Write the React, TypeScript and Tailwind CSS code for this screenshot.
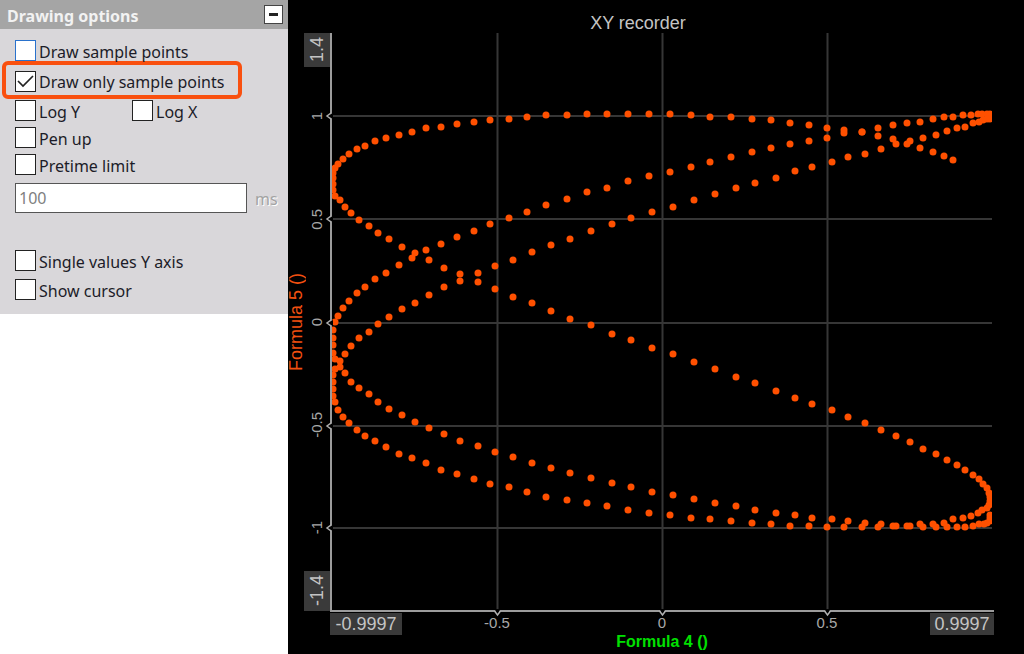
import type { ReactNode } from "react";
import clsx from "clsx";

// Frame that the recorded samples are expressed in.
const frame = { left: 330, top: 33, width: 664, height: 579 };

const px = (x: number) => `${((x - frame.left) / frame.width) * 100}%`;
const py = (y: number) => `${((y - frame.top) / frame.height) * 100}%`;

const xTicks = [
    { at: 497, label: "-0.5" },
    { at: 662, label: "0" },
    { at: 827, label: "0.5" },
];

const yTicks = [
    { at: 116, label: "1" },
    { at: 219, label: "0.5" },
    { at: 323, label: "0" },
    { at: 426, label: "-0.5" },
    { at: 528, label: "-1" },
];

const samples: [number, number][] = [
    // upper arc, right to left
    [953, 160], [944, 156], [933, 152], [920, 148], [907, 144], [893, 139],
    [878, 136], [862, 132], [844, 130], [827, 128], [809, 125], [790, 123],
    [771, 120], [752, 119], [731, 117], [710, 117], [691, 115], [670, 114],
    [649, 114], [628, 114], [607, 114], [587, 114], [567, 115], [546, 115],
    [527, 117], [509, 119], [490, 120], [474, 122], [457, 124], [441, 127],
    [426, 128], [412, 132], [399, 135], [386, 138], [375, 141], [365, 146],
    [357, 149], [349, 154], [343, 159], [338, 164], [335, 168], [333, 173],
    [333, 178], [333, 184], [333, 190], [335, 196], [340, 200], [345, 207],
    [351, 213], [359, 220],
    // diagonal down to the right edge
    [369, 226], [378, 233], [389, 239], [402, 247], [415, 253], [429, 260],
    [444, 268], [460, 274], [478, 282], [495, 289], [513, 297], [532, 303],
    [551, 311], [570, 319], [591, 325], [612, 334], [631, 340], [652, 348],
    [673, 354], [694, 362], [715, 369], [736, 377], [755, 383], [776, 391],
    [795, 398], [812, 404], [832, 410], [848, 417], [865, 423], [881, 430],
    [896, 436], [910, 442], [923, 449], [936, 454], [947, 460], [957, 465],
    [965, 470], [973, 475], [979, 479], [983, 484], [987, 488], [989, 493],
    [990, 497], [990, 501], [989, 505], [987, 508], [982, 510], [978, 513],
    [971, 516], [963, 518], [953, 519], [944, 523], [933, 524], [920, 524],
    // lower arc back to the left edge
    [907, 526], [893, 526], [878, 527], [862, 527], [844, 527], [827, 527],
    [809, 526], [790, 526], [771, 524], [752, 523], [731, 521], [710, 519],
    [691, 518], [670, 515], [649, 513], [628, 510], [607, 506], [587, 503],
    [567, 500], [546, 497], [527, 492], [509, 487], [490, 484], [474, 479],
    [457, 474], [441, 470], [426, 463], [412, 458], [399, 454], [386, 447],
    [375, 441], [365, 436], [357, 430], [349, 423], [343, 417], [338, 410],
    [335, 402], [333, 396], [333, 389], [333, 382], [333, 375], [335, 369],
    [335, 359], [333, 353], [333, 345], [333, 338], [333, 330], [335, 322],
    // rising to the upper right corner
    [338, 316], [343, 308], [349, 301], [357, 293], [365, 287], [375, 279],
    [386, 273], [399, 265], [412, 258], [426, 250], [441, 244], [457, 237],
    [474, 231], [490, 224], [509, 218], [527, 212], [546, 205], [567, 199],
    [587, 192], [607, 188], [628, 181], [649, 176], [670, 172], [691, 167],
    [710, 162], [731, 157], [752, 152], [771, 148], [790, 144], [809, 141],
    [827, 138], [844, 133], [862, 132], [878, 128], [893, 125], [907, 123],
    [920, 122], [933, 119], [944, 117], [953, 117], [963, 115], [971, 115],
    [978, 114], [982, 114], [987, 114], [990, 114], [990, 116], [990, 119],
    // and back down to the left
    [987, 119], [983, 120], [979, 122], [973, 123], [965, 127], [957, 128],
    [947, 131], [936, 135], [923, 138], [910, 141], [896, 144], [881, 149],
    [865, 154], [848, 157], [832, 162], [812, 167], [795, 171], [776, 178],
    [755, 183], [736, 188], [715, 194], [694, 200], [673, 207], [652, 212],
    [631, 218], [612, 224], [591, 231], [570, 239], [551, 245], [532, 252],
    [513, 260], [495, 266], [478, 273], [460, 281], [444, 287], [429, 295],
    [415, 303], [402, 309], [389, 317], [378, 324], [369, 332], [359, 338],
    [351, 346], [345, 354], [340, 361], [340, 367], [345, 373], [351, 382],
    // inner lower arc
    [359, 388], [369, 394], [378, 402], [389, 409], [402, 415], [415, 422],
    [429, 428], [444, 434], [460, 441], [478, 446], [495, 452], [513, 457],
    [532, 463], [551, 468], [570, 473], [591, 478], [612, 483], [631, 487],
    [652, 492], [673, 495], [694, 499], [715, 503], [736, 506], [755, 510],
    [776, 513], [795, 515], [812, 518], [832, 519], [848, 521], [865, 523],
    [881, 524], [896, 526], [910, 526], [923, 527], [936, 527], [947, 527],
    [957, 527], [965, 527], [973, 526], [979, 524], [984, 524], [987, 523],
    [990, 521], [990, 518], [990, 515],
];

type CheckProps = {
    label: string;
    defaultChecked?: boolean;
    focused?: boolean;
};

function Check({ label, defaultChecked, focused }: CheckProps) {
    return (
        <label className="flex h-[21px] items-center gap-[3px] whitespace-nowrap">
            <span className="grid shrink-0">
                <input
                    type="checkbox"
                    defaultChecked={defaultChecked}
                    className={clsx(
                        "peer col-start-1 row-start-1 size-[21px] appearance-none border bg-white",
                        focused ? "border-[#2a72cc]" : "border-[#222]",
                    )}
                />
                <svg
                    viewBox="0 0 21 21"
                    className="pointer-events-none invisible col-start-1 row-start-1 size-[21px] peer-checked:visible"
                    fill="none"
                    stroke="#222"
                    strokeWidth={1.7}
                >
                    <path d="M3 10 L8 15 L18 5" />
                </svg>
            </span>
            <span className="pt-[2px]">{label}</span>
        </label>
    );
}

function OptionsPanel() {
    return (
        <aside className="w-72 shrink-0 font-['Noto_Sans','DejaVu_Sans_Condensed',sans-serif] text-base text-[#1c1c28]">
            <header className="flex h-[29px] items-center justify-between bg-[#a5a5a5] pr-[5px] pl-[7px]">
                <h2 className="pt-[2px] text-base font-bold text-[#f2f2f2]">
                    Drawing options
                </h2>
                <button
                    type="button"
                    aria-label="Collapse"
                    className="flex size-[19px] items-center justify-center border border-[#444] bg-white"
                >
                    <span className="h-[3px] w-[9px] bg-[#222]" />
                </button>
            </header>

            <div className="bg-[#d9d7da] pt-[11px] pb-[14px] pl-[15px]">
                <Check label="Draw sample points" focused />
                <div className="-ml-[13px] flex h-[38px] w-60 items-center rounded-md border-4 border-[#f9500f] pt-[2px] pl-[9px]">
                    <Check label="Draw only sample points" defaultChecked />
                </div>
                <div className="mt-px grid grid-cols-[117px_1fr]">
                    <Check label="Log Y" />
                    <Check label="Log X" />
                </div>
                <div className="mt-[6px]">
                    <Check label="Pen up" />
                </div>
                <div className="mt-[6px]">
                    <Check label="Pretime limit" />
                </div>
                <div className="mt-2 flex items-center gap-2">
                    <input
                        type="text"
                        defaultValue="100"
                        disabled
                        aria-label="Pretime limit in ms"
                        className="h-[30px] w-[232px] border border-[#555] bg-white px-[3px] text-[#808080]"
                    />
                    <span className="pt-[2px] text-[#a3a3a3] [text-shadow:1px_1px_0_#fff]">
                        ms
                    </span>
                </div>
                <div className="mt-[37px]">
                    <Check label="Single values Y axis" />
                </div>
                <div className="mt-2">
                    <Check label="Show cursor" />
                </div>
            </div>
        </aside>
    );
}

function Vertical({ children }: { children: ReactNode }) {
    return (
        <span className="rotate-180 whitespace-nowrap [writing-mode:vertical-rl]">
            {children}
        </span>
    );
}

function Plot() {
    return (
        <svg
            className="min-w-0 flex-1 self-stretch overflow-visible"
            role="img"
            aria-label="Formula 5 plotted against Formula 4"
        >
            <clipPath id="plot-area">
                <rect width="99.7%" height="100%" />
            </clipPath>

            <g stroke="#363636" strokeWidth={2}>
                {xTicks.map(({ at }) => (
                    <line key={at} x1={px(at + 0.5)} x2={px(at + 0.5)} y1="0" y2="100%" />
                ))}
                {yTicks.map(({ at }) => (
                    <line key={at} x1="0" x2="99.7%" y1={py(at)} y2={py(at)} />
                ))}
            </g>

            <g fill="#ff5000" clipPath="url(#plot-area)">
                {samples.map(([x, y], i) => (
                    <circle key={i} cx={px(x)} cy={py(y)} r={3.5} />
                ))}
            </g>

            <g stroke="#9c9c9c" strokeWidth={2}>
                <line x1="1" x2="1" y1="0" y2="100%" />
                <line x1="0" x2="100%" y1={py(611)} y2={py(611)} />
            </g>

            {/* notches where the grid meets the axes */}
            {yTicks.map(({ at }) => (
                <svg key={at} x="0" y={py(at)} className="overflow-visible">
                    <path d="M3 -3 L-3 0 L3 3 Z" fill="#000" />
                    <path d="M1 -3 L-3 0 L1 3" fill="none" stroke="#b0b0b0" strokeWidth={1.5} />
                </svg>
            ))}
            {xTicks.map(({ at }) => (
                <svg key={at} x={px(at + 0.5)} y={py(611)} className="overflow-visible">
                    <path d="M-3 -2 L0 4 L3 -2 Z" fill="#000" />
                    <path d="M-3 0 L0 4 L3 0" fill="none" stroke="#b0b0b0" strokeWidth={1.5} />
                </svg>
            ))}
        </svg>
    );
}

function Recorder() {
    return (
        <main className="flex min-w-0 flex-1 flex-col bg-black font-['Liberation_Sans',Arial,sans-serif] text-[#c4c4c4]">
            <h1 className="flex h-[33px] items-end justify-center pr-9 text-lg leading-5">
                XY recorder
            </h1>

            <div className="flex flex-1 pr-[30px]">
                <div className="flex w-4 items-center justify-center text-lg leading-4 text-[#f25010]">
                    <Vertical>Formula 5 ()</Vertical>
                </div>
                <div className="flex w-[26px] flex-col pb-px text-lg leading-[26px]">
                    <div className="flex h-[34px] items-center justify-center bg-[#3a3a3a]">
                        <Vertical>1.4</Vertical>
                    </div>
                    <div className="flex flex-1 flex-col justify-between pt-[29px] pb-[23px] text-[15px] text-[#a8a8a8]">
                        {yTicks.map(({ label }) => (
                            <div key={label} className="flex h-10 items-center justify-center">
                                <Vertical>{label}</Vertical>
                            </div>
                        ))}
                    </div>
                    <div className="flex h-10 items-center justify-center bg-[#3a3a3a]">
                        <Vertical>-1.4</Vertical>
                    </div>
                </div>
                <Plot />
            </div>

            <div className="flex pt-px pr-[30px] pl-[42px] text-lg leading-[22px]">
                <div className="w-[72px] bg-[#3a3a3a] text-center">-0.9997</div>
                <div className="flex flex-1 justify-between pr-[83px] pl-[75px] text-[15px] leading-5 text-[#a8a8a8]">
                    {xTicks.map(({ label }) => (
                        <span key={label} className="w-10 text-center">
                            {label}
                        </span>
                    ))}
                </div>
                <div className="w-16 bg-[#3a3a3a] text-center">0.9997</div>
            </div>
            <p className="h-[19px] pr-[30px] pl-[42px] text-center text-base leading-[14px] font-bold text-[#00e000]">
                Formula 4 ()
            </p>
        </main>
    );
}

export default function App() {
    return (
        <div className="flex min-h-screen bg-white">
            <OptionsPanel />
            <Recorder />
        </div>
    );
}
